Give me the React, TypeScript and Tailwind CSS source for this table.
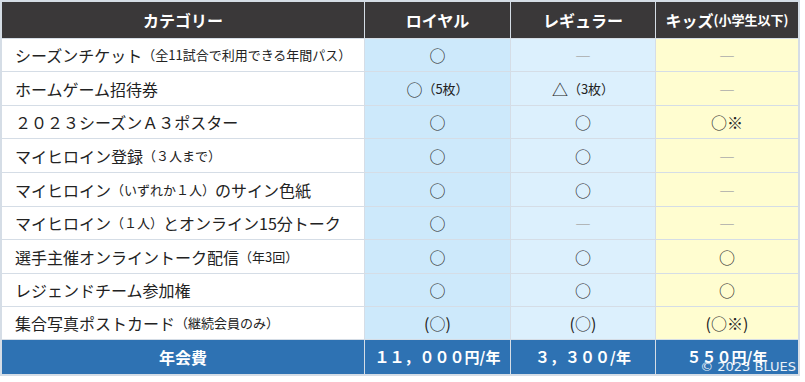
import React from "react";

const font = { fontFamily: '"Noto Sans CJK JP", "Noto Sans", sans-serif' };

const Circle = () => <span>○</span>;
const Dash = () => <span className="text-[#a9a9a9] font-bold">―</span>;

type Row = {
  label: React.ReactNode;
  royal: React.ReactNode;
  regular: React.ReactNode;
  kids: React.ReactNode;
};

const small = (s: string) => <span className="text-[13px]">{s}</span>;

const rows: Row[] = [
  {
    label: <>シーズンチケット{small("（全11試合で利用できる年間パス）")}</>,
    royal: <Circle />,
    regular: <Dash />,
    kids: <Dash />,
  },
  {
    label: <>ホームゲーム招待券</>,
    royal: <>○{small("（5枚）")}</>,
    regular: <>△{small("（3枚）")}</>,
    kids: <Dash />,
  },
  {
    label: <>２０２３シーズンＡ３ポスター</>,
    royal: <Circle />,
    regular: <Circle />,
    kids: <>○※</>,
  },
  {
    label: <>マイヒロイン登録{small("（３人まで）")}</>,
    royal: <Circle />,
    regular: <Circle />,
    kids: <Dash />,
  },
  {
    label: <>マイヒロイン{small("（いずれか１人）")}のサイン色紙</>,
    royal: <Circle />,
    regular: <Circle />,
    kids: <Dash />,
  },
  {
    label: <>マイヒロイン{small("（１人）")}とオンライン15分トーク</>,
    royal: <Circle />,
    regular: <Dash />,
    kids: <Dash />,
  },
  {
    label: <>選手主催オンライントーク配信{small("（年3回）")}</>,
    royal: <Circle />,
    regular: <Circle />,
    kids: <Circle />,
  },
  {
    label: <>レジェンドチーム参加権</>,
    royal: <Circle />,
    regular: <Circle />,
    kids: <Circle />,
  },
  {
    label: <>集合写真ポストカード{small("（継続会員のみ）")}</>,
    royal: <>(○)</>,
    regular: <>(○)</>,
    kids: <>(○※)</>,
  },
];

export default function App() {
  return (
    <div className="relative w-[805px] h-[382px] bg-white text-[#222]" style={font}>
      <div className="grid w-[800px] grid-cols-[362px_145px_144px_142px] grid-rows-[36px_32px_33px_32px_33px_33px_32px_33px_32px_32px_34px] gap-px bg-[#d5dde6] p-[2px] text-[16px]">
        {/* header */}
        <div className="bg-[#3a3839] text-white font-bold flex items-center justify-center">カテゴリー</div>
        <div className="bg-[#3a3839] text-white font-bold flex items-center justify-center">ロイヤル</div>
        <div className="bg-[#3a3839] text-white font-bold flex items-center justify-center">レギュラー</div>
        <div className="bg-[#3a3839] text-white font-bold flex items-center justify-center">
          キッズ<span className="text-[13px]">(小学生以下)</span>
        </div>

        {rows.map((r, i) => (
          <React.Fragment key={i}>
            <div className="bg-white flex items-center pl-[13px] whitespace-nowrap">{r.label}</div>
            <div className="bg-[#cde9fb] flex items-center justify-center">{r.royal}</div>
            <div className="bg-[#dcf0fd] flex items-center justify-center">{r.regular}</div>
            <div className="bg-[#fffdd0] flex items-center justify-center">{r.kids}</div>
          </React.Fragment>
        ))}

        {/* footer */}
        <div className="bg-[#2e72b3] text-white font-bold flex items-center justify-center">年会費</div>
        <div className="bg-[#2e72b3] text-white font-bold text-[15px] flex items-center justify-center">１１，０００円/年</div>
        <div className="bg-[#2e72b3] text-white font-bold text-[15px] flex items-center justify-center">３，３００/年</div>
        <div className="bg-[#2e72b3] text-white font-bold text-[15px] flex items-center justify-center">５５０円/年</div>
      </div>

      <div
        className="absolute right-[9px] bottom-[9px] text-[13px] leading-none text-white/90"
        style={{ fontFamily: '"DejaVu Sans", sans-serif' }}
      >
        © 2023 BLUES
      </div>
    </div>
  );
}
